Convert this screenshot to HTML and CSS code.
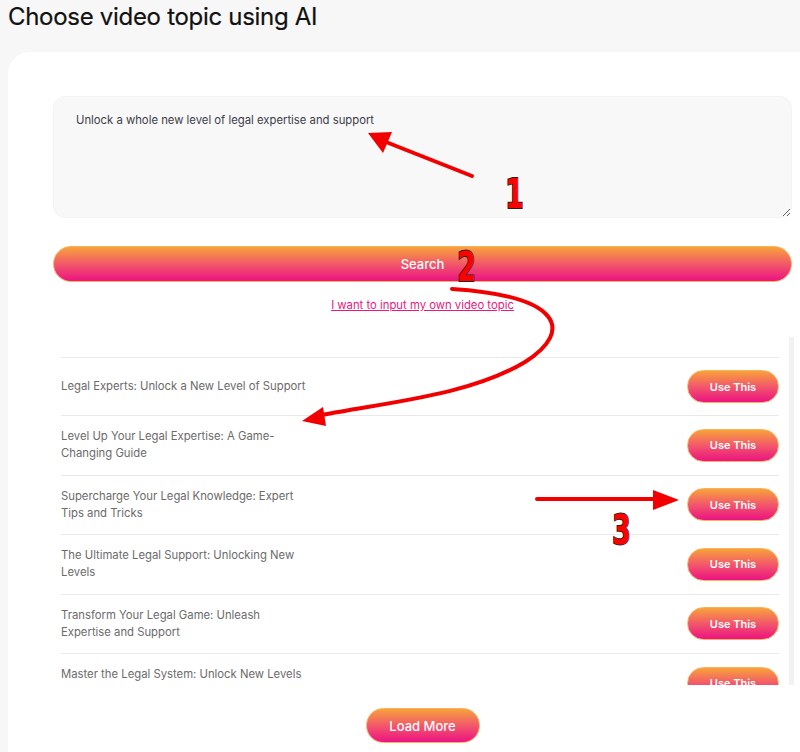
FILE: index.html
```html
<!DOCTYPE html>
<html>
<head>
<meta charset="utf-8">
<link rel="stylesheet" href="styles.css">
</head>
<body>
<h1 class="title">Choose video topic using AI</h1>
<div class="card">
  <textarea class="prompt">Unlock a whole new level of legal expertise and support</textarea>
  <button class="btn btn-search">Search</button>
  <div class="link-row"><a class="own-link" href="#">I want to input my own video topic</a></div>
  <div class="results">
    <div class="row"><span class="row-text">Legal Experts: Unlock a New Level of Support</span><button class="btn btn-use">Use This</button></div>
    <div class="row"><span class="row-text">Level Up Your Legal Expertise: A Game-Changing Guide</span><button class="btn btn-use">Use This</button></div>
    <div class="row"><span class="row-text">Supercharge Your Legal Knowledge: Expert Tips and Tricks</span><button class="btn btn-use">Use This</button></div>
    <div class="row"><span class="row-text">The Ultimate Legal Support: Unlocking New Levels</span><button class="btn btn-use">Use This</button></div>
    <div class="row"><span class="row-text">Transform Your Legal Game: Unleash Expertise and Support</span><button class="btn btn-use">Use This</button></div>
    <div class="row"><span class="row-text">Master the Legal System: Unlock New Levels of Expertise</span><button class="btn btn-use">Use This</button></div>
    <div class="row"><span class="row-text">Legal Support Reimagined: Expert Strategies</span><button class="btn btn-use">Use This</button></div>
  </div>
  <div class="more-row"><button class="btn btn-more">Load More</button></div>
</div>

<svg class="annot" width="800" height="752" viewBox="0 0 800 752">
  <g fill="none" stroke="#f20000" stroke-width="4" stroke-linecap="round">
    <path d="M472 176 L386 142"/>
    <path d="M452 289 C 560 296 575 330 525 362 C 470 395 390 402 322 415"/>
    <path d="M537 499 L656 499"/>
  </g>
  <g fill="#f20000">
    <polygon points="368,133 392,132 383,153"/>
    <polygon points="302,421 323,407 326,426"/>
    <polygon points="679,500 653,490 653,510"/>
  </g>
  <g class="num" fill="#ff0000" stroke="#222" stroke-width="1.8">
    <text transform="translate(505 208) scale(0.66 1)">1</text>
    <text transform="translate(457 281) scale(0.66 1)">2</text>
    <text transform="translate(612 544) scale(0.66 1)">3</text>
  </g>
</svg>
</body>
</html>
```

FILE: styles.css
```css
html, body {
  margin: 0;
  padding: 0;
}
body {
  background: #f7f7f7;
  font-family: Inter, "Noto Sans", sans-serif;
  width: 800px;
  height: 752px;
  overflow: hidden;
  position: relative;
}
.title {
  margin: 0;
  padding: 2px 8px 0;
  font-size: 24px;
  font-weight: 400;
  line-height: 30px;
  color: #111;
  letter-spacing: -0.3px;
  -webkit-text-stroke: 0.2px #111;
}
.card {
  margin: 20px -40px 0 8px;
  background: #fff;
  border-radius: 22px 22px 0 0;
  padding: 44px 45px 0 45px;
  height: 700px;
  box-sizing: border-box;
}
.prompt {
  display: block;
  width: 739px;
  height: 122px;
  box-sizing: border-box;
  background: #f8f8f8;
  border: 1px solid #f3f3f3;
  border-radius: 12px;
  padding: 15px 22px;
  font-family: inherit;
  font-size: 11.3px;
  line-height: 17px;
  color: #3d3d4a;
  resize: vertical;
  outline: none;
}
.btn {
  border: 1px solid #f7b25c;
  background: linear-gradient(to bottom, #f8a23a 0%, #f2586a 50%, #ec1382 100%);
  color: #fff;
  font-family: inherit;
  border-radius: 999px;
  cursor: pointer;
  box-sizing: border-box;
}
.btn-search {
  display: block;
  width: 739px;
  height: 36px;
  margin-top: 28px;
  font-size: 13px;
  font-weight: 500;
}
.link-row {
  width: 739px;
  text-align: center;
  margin-top: 12px;
  line-height: 18px;
}
.own-link {
  color: #e8197e;
  font-size: 11.3px;
  text-decoration: underline;
}
.results {
  width: 741px;
  height: 348px;
  margin-top: 23px;
  box-sizing: border-box;
  padding: 20px 10px 0 8px;
  overflow: hidden;
  border-right: 5px solid #f2f2f2;
}
.row {
  display: flex;
  align-items: center;
  justify-content: space-between;
  border-top: 1px solid #e9e9e9;
  padding: 12px 0;
  min-height: 33px;
}
.row-text {
  width: 252px;
  font-size: 11.3px;
  line-height: 17.25px;
  color: #6b6b6b;
}
.btn-use {
  width: 92px;
  height: 33px;
  font-size: 11px;
  font-weight: 600;
}
.more-row {
  width: 739px;
  display: flex;
  justify-content: center;
  margin-top: 23px;
}
.btn-more {
  width: 114px;
  height: 35px;
  font-size: 13px;
  font-weight: 500;
}
.annot {
  position: absolute;
  left: 0;
  top: 0;
  pointer-events: none;
}
.num text {
  font-family: "DejaVu Sans", sans-serif;
  font-weight: bold;
  font-size: 41px;
  paint-order: stroke;
}
```
